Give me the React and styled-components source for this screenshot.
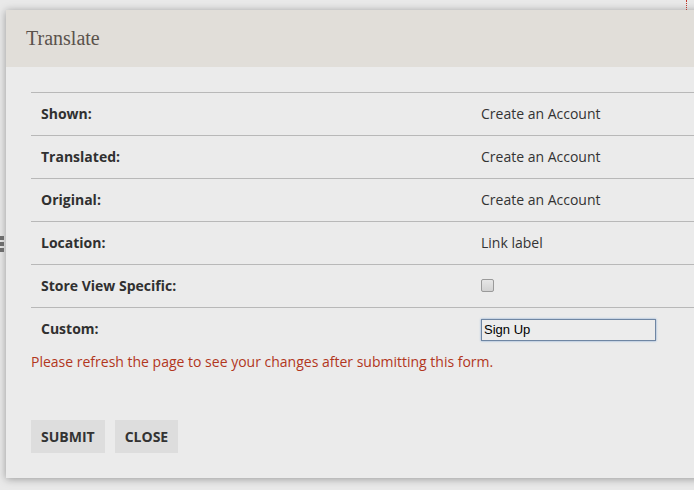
import styled, { createGlobalStyle } from "styled-components";

const GlobalStyle = createGlobalStyle`
  html, body {
    margin: 0;
    padding: 0;
    background: #e9e9e9;
    overflow: hidden;
  }
  body {
    font-family: "Open Sans", "Noto Sans", sans-serif;
  }
`;

const Page = styled.div`
  position: relative;
  width: 694px;
  height: 490px;
  padding: 10px 0 0 6px;
  box-sizing: border-box;
  overflow: hidden;
`;

const Marker = styled.div`
  position: absolute;
  top: 0;
  right: 6px;
  width: 1px;
  height: 10px;
  border-left: 1px dotted #c0392b;
`;

const Handle = styled.div`
  position: absolute;
  left: 0;
  top: 236px;
  width: 4px;
  display: flex;
  flex-direction: column;
  gap: 2px;
  span {
    height: 4px;
    background: #6d6d6d;
  }
`;

const Modal = styled.section`
  width: 720px;
  height: 468px;
  background: #ebebeb;
  box-shadow: 0 1px 8px rgba(0, 0, 0, 0.35);
  display: flex;
  flex-direction: column;
`;

const Header = styled.header`
  height: 57px;
  background: #e1ded9;
  display: flex;
  align-items: center;
  padding-left: 20px;
`;

const Title = styled.h1`
  margin: 0;
  font-family: "Liberation Serif", "DejaVu Serif", serif;
  font-weight: normal;
  font-size: 20px;
  color: #5a524c;
`;

const Body = styled.div`
  padding: 25px 0 0 25px;
  display: flex;
  flex-direction: column;
`;

const Table = styled.table`
  width: 695px;
  border-collapse: collapse;
  font-size: 14px;
  color: #333;
`;

const Row = styled.tr`
  border-top: 1px solid #b8b8b8;
  height: ${({ $last }) => ($last ? "44px" : "43px")};
`;

const Label = styled.th`
  width: 420px;
  text-align: left;
  font-weight: bold;
  color: #303030;
  padding: 0 10px 2px;
  vertical-align: middle;
`;

const Value = styled.td`
  padding: 0 10px 2px;
  vertical-align: middle;
`;

const Check = styled.input`
  appearance: none;
  box-sizing: border-box;
  margin: 0;
  width: 13px;
  height: 13px;
  border: 1px solid #9a9a9a;
  border-radius: 2px;
  background: linear-gradient(#e6e6e6, #d2d2d2);
  vertical-align: middle;
  position: relative;
  top: -1px;
`;

const TextInput = styled.input`
  box-sizing: border-box;
  width: 175px;
  height: 22px;
  margin: 0;
  padding: 0 2px;
  font-family: "Liberation Sans", Arial, sans-serif;
  font-size: 13px;
  color: #000;
  background: #ececec;
  border: 1px solid #6f86a3;
  box-shadow: 0 0 2px #7fa6d4;
  outline: none;
  vertical-align: middle;
  position: relative;
  top: 1px;
`;

const Notice = styled.p`
  margin: 0;
  font-size: 14px;
  color: #b2361d;
  line-height: 20px;
`;

const Actions = styled.div`
  display: flex;
  gap: 10px;
  margin-top: 48px;
`;

const Button = styled.button`
  height: 33px;
  padding: 0 10px;
  border: none;
  background: #dddddd;
  font-family: "Open Sans", "Noto Sans", sans-serif;
  font-weight: bold;
  font-size: 14px;
  color: #333;
  text-transform: uppercase;
  cursor: pointer;
`;

const rows = [
  ["Shown:", "Create an Account"],
  ["Translated:", "Create an Account"],
  ["Original:", "Create an Account"],
  ["Location:", "Link label"],
];

export default function App() {
  return (
    <>
      <GlobalStyle />
      <Page>
        <Marker />
        <Handle>
          <span />
          <span />
          <span />
        </Handle>
        <Modal>
          <Header>
            <Title>Translate</Title>
          </Header>
          <Body>
            <Table>
              <tbody>
                {rows.map(([label, value]) => (
                  <Row key={label}>
                    <Label>{label}</Label>
                    <Value>{value}</Value>
                  </Row>
                ))}
                <Row>
                  <Label>Store View Specific:</Label>
                  <Value>
                    <Check type="checkbox" />
                  </Value>
                </Row>
                <Row $last>
                  <Label>Custom:</Label>
                  <Value>
                    <TextInput type="text" defaultValue="Sign Up" />
                  </Value>
                </Row>
              </tbody>
            </Table>
            <Notice>Please refresh the page to see your changes after submitting this form.</Notice>
            <Actions>
              <Button>Submit</Button>
              <Button>Close</Button>
            </Actions>
          </Body>
        </Modal>
      </Page>
    </>
  );
}
